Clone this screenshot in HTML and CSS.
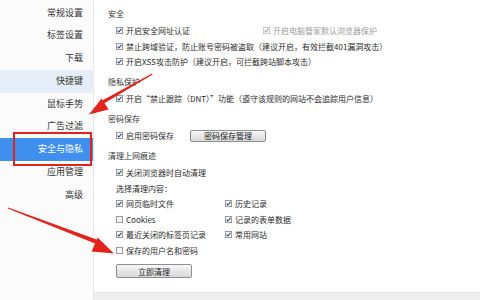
FILE: index.html
```html
<!DOCTYPE html>
<html lang="zh-CN">
<head>
<meta charset="utf-8">
<title>安全与隐私</title>
<link rel="stylesheet" href="styles.css">
</head>
<body>
<div class="app">
  <nav class="sidebar">
    <div class="nav-item">常规设置</div>
    <div class="nav-item">标签设置</div>
    <div class="nav-item">下载</div>
    <div class="nav-item hover">快捷键</div>
    <div class="nav-item">鼠标手势</div>
    <div class="nav-item">广告过滤</div>
    <div class="nav-item active">安全与隐私</div>
    <div class="nav-item">应用管理</div>
    <div class="nav-item">高级</div>
  </nav>
  <main class="main">
    <div class="content">
      <section class="section">
        <div class="h">安全</div>
        <div class="rows">
          <div class="row">
            <span class="item wide"><svg class="cb" viewBox="0 0 8 8"><rect x=".5" y=".5" width="7" height="7" class="box"/><path d="M1.8 4.1 3.3 5.7 6.2 2.1" class="tick"/></svg>开启安全网址认证</span>
            <span class="item disabled"><svg class="cb" viewBox="0 0 8 8"><rect x=".5" y=".5" width="7" height="7" class="box"/><path d="M1.8 4.1 3.3 5.7 6.2 2.1" class="tick"/></svg>开启电脑管家默认浏览器保护</span>
          </div>
          <div class="row"><span class="item"><svg class="cb" viewBox="0 0 8 8"><rect x=".5" y=".5" width="7" height="7" class="box"/><path d="M1.8 4.1 3.3 5.7 6.2 2.1" class="tick"/></svg>禁止跨域验证，防止账号密码被盗取（建议开启，有效拦截401漏洞攻击）</span></div>
          <div class="row"><span class="item"><svg class="cb" viewBox="0 0 8 8"><rect x=".5" y=".5" width="7" height="7" class="box"/><path d="M1.8 4.1 3.3 5.7 6.2 2.1" class="tick"/></svg>开启XSS攻击防护（建议开启，可拦截跨站脚本攻击）</span></div>
        </div>
      </section>
      <section class="section">
        <div class="h">隐私保护</div>
        <div class="rows">
          <div class="row"><span class="item"><svg class="cb" viewBox="0 0 8 8"><rect x=".5" y=".5" width="7" height="7" class="box"/><path d="M1.8 4.1 3.3 5.7 6.2 2.1" class="tick"/></svg>开启“禁止跟踪（DNT）”功能（遵守该规则的网站不会追踪用户信息）</span></div>
        </div>
      </section>
      <section class="section">
        <div class="h">密码保存</div>
        <div class="rows">
          <div class="row">
            <span class="item pw"><svg class="cb" viewBox="0 0 8 8"><rect x=".5" y=".5" width="7" height="7" class="box"/><path d="M1.8 4.1 3.3 5.7 6.2 2.1" class="tick"/></svg>启用密码保存</span>
            <span class="btn btn-pw">密码保存管理</span>
          </div>
        </div>
      </section>
      <section class="section">
        <div class="h">清理上网痕迹</div>
        <div class="rows">
          <div class="row"><span class="item"><svg class="cb" viewBox="0 0 8 8"><rect x=".5" y=".5" width="7" height="7" class="box"/><path d="M1.8 4.1 3.3 5.7 6.2 2.1" class="tick"/></svg>关闭浏览器时自动清理</span></div>
          <div class="row label">选择清理内容：</div>
          <div class="grid">
            <span class="item"><svg class="cb" viewBox="0 0 8 8"><rect x=".5" y=".5" width="7" height="7" class="box"/><path d="M1.8 4.1 3.3 5.7 6.2 2.1" class="tick"/></svg>网页临时文件</span>
            <span class="item"><svg class="cb" viewBox="0 0 8 8"><rect x=".5" y=".5" width="7" height="7" class="box"/><path d="M1.8 4.1 3.3 5.7 6.2 2.1" class="tick"/></svg>历史记录</span>
            <span class="item"><svg class="cb" viewBox="0 0 8 8"><rect x=".5" y=".5" width="7" height="7" class="box"/></svg>Cookies</span>
            <span class="item"><svg class="cb" viewBox="0 0 8 8"><rect x=".5" y=".5" width="7" height="7" class="box"/><path d="M1.8 4.1 3.3 5.7 6.2 2.1" class="tick"/></svg>记录的表单数据</span>
            <span class="item"><svg class="cb" viewBox="0 0 8 8"><rect x=".5" y=".5" width="7" height="7" class="box"/><path d="M1.8 4.1 3.3 5.7 6.2 2.1" class="tick"/></svg>最近关闭的标签页记录</span>
            <span class="item"><svg class="cb" viewBox="0 0 8 8"><rect x=".5" y=".5" width="7" height="7" class="box"/><path d="M1.8 4.1 3.3 5.7 6.2 2.1" class="tick"/></svg>常用网站</span>
            <span class="item"><svg class="cb" viewBox="0 0 8 8"><rect x=".5" y=".5" width="7" height="7" class="box"/></svg>保存的用户名和密码</span>
          </div>
          <span class="btn btn-clean">立即清理</span>
        </div>
      </section>
    </div>
    <div class="footer"></div>
  </main>
</div>
<div class="highlight"></div>
<svg class="arrows" viewBox="0 0 480 300" width="480" height="300">
  <polygon class="shaft" points="152,73.4 152.6,74.4 103.9,103.5 102.2,100.6"/>
  <polygon class="head" points="89,114.5 101.6,98.6 108.6,109.6"/>
  <polygon class="shaft" points="8.2,207.4 7.8,208.6 95.6,243.8 97.2,239.8"/>
  <polygon class="head" points="114,253.5 97.6,237.6 91.6,251.6"/>
</svg>
</body>
</html>
```

FILE: styles.css
```css
html, body {
  margin: 0;
  padding: 0;
}
body {
  width: 480px;
  height: 300px;
  overflow: hidden;
  position: relative;
  background: #ffffff;
  font-family: "Noto Sans CJK SC", "Noto Sans", sans-serif;
  color: #2b2b2b;
}
.app {
  display: flex;
  height: 300px;
}
.sidebar {
  width: 94px;
  flex: none;
  box-sizing: border-box;
  background: #fbfbfc;
  border-right: 1px solid #e6e8eb;
  padding-top: 1.6px;
}
.nav-item {
  height: 22.75px;
  line-height: 22.75px;
  text-align: right;
  padding-right: 10px;
  font-size: 9px;
  color: #333333;
}
.nav-item.hover {
  background: #e6eff9;
}
.nav-item.active {
  background: #3f8fef;
  color: #ffffff;
}
.main {
  flex: 1;
  display: flex;
  flex-direction: column;
}
.content {
  flex: 1;
  padding: 6px 0 0 14px;
}
.footer {
  height: 7px;
  background: #efefef;
  border-top: 1px solid #e3e3e3;
}
.section + .section {
  margin-top: 4.5px;
}
.h {
  height: 16px;
  line-height: 16px;
  font-size: 8px;
  color: #333333;
  margin-bottom: 1px;
}
.rows {
  padding-left: 8px;
}
.row {
  height: 15.5px;
  display: flex;
  align-items: center;
  font-size: 8px;
  white-space: nowrap;
}
.item {
  display: flex;
  align-items: center;
  font-size: 8px;
  white-space: nowrap;
}
.item.wide {
  width: 147px;
}
.item.pw {
  width: 74px;
}
.item.disabled {
  color: #9a9a9a;
}
.cb {
  width: 7px;
  height: 7px;
  flex: none;
  margin-right: 3px;
}
.box {
  fill: #f5f5f5;
  stroke: #8c8e90;
  stroke-width: 1;
}
.tick {
  fill: none;
  stroke: #2f4f80;
  stroke-width: 1.3;
}
.disabled .box {
  stroke: #c4c4c4;
  fill: #fafafa;
}
.disabled .tick {
  stroke: #a8a8a8;
}
.grid {
  display: grid;
  grid-template-columns: 109px 120px;
  grid-auto-rows: 15.5px;
  align-items: center;
}
.btn {
  display: flex;
  align-items: center;
  justify-content: center;
  box-sizing: border-box;
  width: 76px;
  font-size: 8px;
  color: #222222;
  border: 1px solid #8e8f91;
  border-radius: 2px;
  background: linear-gradient(#f8f8f8, #e6e6e6 50%, #d9d9d9);
}
.btn-pw {
  height: 12px;
}
.btn-clean {
  height: 14px;
  margin-top: 6px;
}
.highlight {
  position: absolute;
  left: 13px;
  top: 132px;
  width: 79px;
  height: 34px;
  box-sizing: border-box;
  border: 2px solid #e0231f;
}
.arrows {
  position: absolute;
  left: 0;
  top: 0;
  pointer-events: none;
}
.shaft, .head {
  fill: #e3241d;
}
```
